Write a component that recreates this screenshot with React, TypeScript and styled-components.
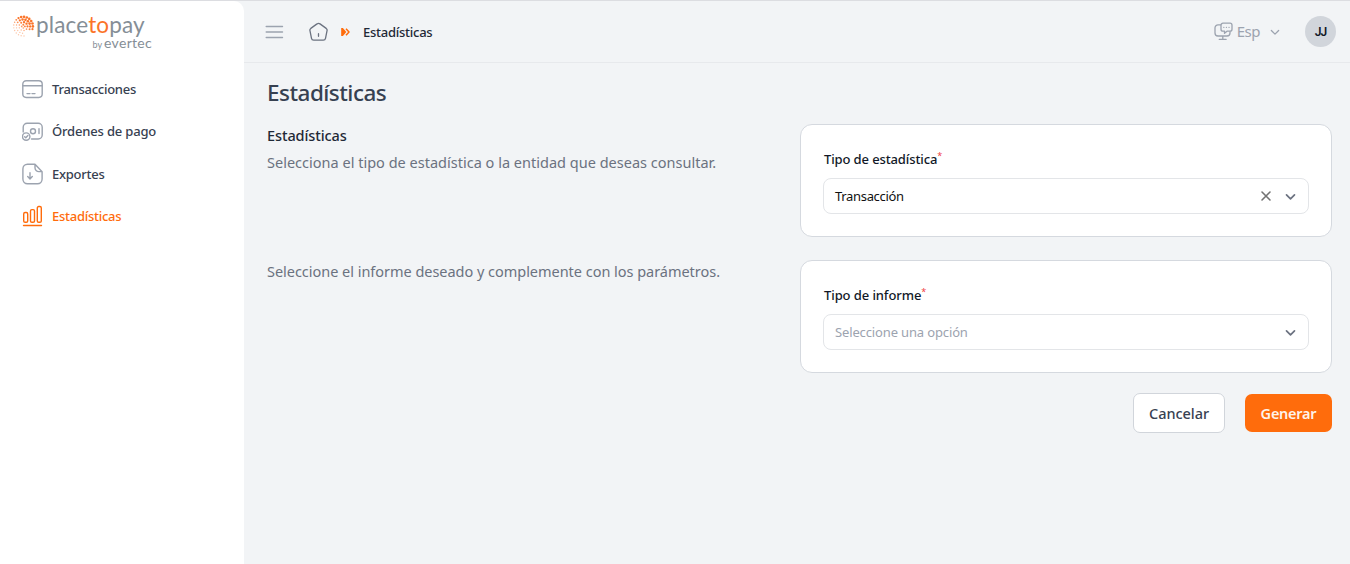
import React from "react";
import styled, { createGlobalStyle } from "styled-components";

const GlobalStyle = createGlobalStyle`
  * { box-sizing: border-box; }
  body { margin: 0; background: #f2f4f6; font-family: "Noto Sans", "Open Sans", sans-serif; }
  button { font-family: inherit; }
`;

const Page = styled.div`
  display: flex;
  height: 564px;
  border-top: 1px solid #dcdde1;
  overflow: hidden;
`;
const Sidebar = styled.aside`
  width: 244px;
  flex: none;
  background: #fff;
  border-top-right-radius: 10px;
`;
const Brand = styled.div`
  display: flex;
  height: 67px;
  padding: 13px 0 0 12px;
`;
const BrandText = styled.div`
  width: 116px;
  display: flex;
  flex-direction: column;
  font-family: Lato, sans-serif;
  color: #858e96;
  white-space: nowrap;
`;
const BrandName = styled.div`
  font-size: 22.5px;
  line-height: 22px;
  height: 22px;
  letter-spacing: 0.15px;
  span { color: #fb7429; }
`;
const BrandBy = styled.div`
  display: flex;
  align-items: baseline;
  justify-content: flex-end;
  gap: 2px;
  font-size: 14px;
  line-height: 13px;
  letter-spacing: 0.3px;
  small { font-size: 9px; letter-spacing: 0; }
`;
const Nav = styled.nav`
  display: flex;
  flex-direction: column;
  padding-left: 22px;
`;
const NavItem = styled.a<{ $active?: boolean }>`
  display: flex;
  align-items: center;
  height: 42.3px;
  gap: 9px;
  color: ${(p) => (p.$active ? "#ff6c0c" : "#374151")};
  svg { color: ${(p) => (p.$active ? "#ff6c0c" : "#9ca3af")}; flex: none; }
`;
const Label = styled.span<{ $size: number; $weight?: number; $track?: number }>`
  font-size: ${(p) => p.$size}px;
  font-weight: ${(p) => p.$weight ?? 400};
  letter-spacing: ${(p) => p.$track ?? 0}px;
  white-space: nowrap;
`;
const Main = styled.main`
  flex: 1;
  min-width: 0;
`;
const Header = styled.header`
  display: flex;
  align-items: center;
  height: 62px;
  padding: 0 14px 0 21px;
  border-bottom: 1px solid #e7e9ec;
  color: #9ca3af;
`;
const Crumbs = styled.div`
  display: flex;
  align-items: center;
  flex: 1;
  margin-left: 24px;
  color: #1f2937;
  svg:first-child { margin-right: 12px; }
  svg:nth-child(2) { margin-right: 12px; }
`;
const Language = styled.div`
  display: flex;
  align-items: center;
  gap: 4px;
  margin-right: 25px;
  > span { line-height: 20px; padding-bottom: 1px; }
  svg:last-child { margin-left: 6px; }
`;
const Avatar = styled.div`
  display: grid;
  place-items: center;
  width: 31px;
  height: 31px;
  border-radius: 50%;
  background: #d1d5db;
  color: #111827;
  font-family: Roboto, sans-serif;
`;
const Content = styled.section`
  padding: 14px 18px 0 23px;
`;
const Title = styled.h1`
  margin: 0;
  height: 47px;
  font-size: 22.5px;
  line-height: 32px;
  font-weight: 500;
  letter-spacing: -0.52px;
  color: #374151;
`;
const Row = styled.div`
  display: grid;
  grid-template-columns: 1fr 532px;
  height: 113px;
  margin-bottom: 23.4px;
`;
const Description = styled.div`
  display: flex;
  flex-direction: column;
  color: #6b7280;
`;
const Heading = styled.div`
  line-height: 22px;
  height: 27px;
  color: #1f2937;
`;
const Subtext = styled.div`
  line-height: 22px;
`;
const Card = styled.div`
  border: 1px solid #d5d9df;
  border-radius: 12px;
  background: #fff;
  padding: 24px 22px 0;
`;
const FieldLabel = styled.div`
  height: 29px;
  line-height: 20px;
  padding-left: 1px;
  color: #111827;
  display: flex;
  sup { color: #ef4444; font-size: 9px; line-height: 14px; }
`;
const Select = styled.div<{ $placeholder?: boolean }>`
  display: flex;
  align-items: center;
  height: 36px;
  padding: 0 12px 0 11px;
  border: 1px solid #e3e5e8;
  border-radius: 8px;
  gap: 13px;
  color: ${(p) => (p.$placeholder ? "#9ca3af" : "#111")};
  > span { flex: 1; }
`;
const Actions = styled.div`
  display: flex;
  justify-content: flex-end;
  align-items: center;
  gap: 20px;
  margin-top: -4px;
  height: 40px;
`;
const Button = styled.button<{ $primary?: boolean }>`
  width: ${(p) => (p.$primary ? 87 : 92)}px;
  height: ${(p) => (p.$primary ? 38 : 40)}px;
  padding: 0;
  border-radius: 7px;
  border: ${(p) => (p.$primary ? "0" : "1px solid #d1d5db")};
  background: ${(p) => (p.$primary ? "#ff6c0c" : "#fff")};
  color: ${(p) => (p.$primary ? "#fff3ea" : "#374151")};
`;

const rings = [
  { r: 1.6, n: 4 }, { r: 4.2, n: 9 }, { r: 6.9, n: 15 }, { r: 9.6, n: 21 },
];
const Dots = () => (
  <svg width="24" height="24" viewBox="0 0 24 24" fill="#fb7429">
    {rings.flatMap(({ r, n }) =>
      Array.from({ length: n }, (_, i) => {
        const a = (i / n) * Math.PI * 2;
        const x = Math.cos(a) * r;
        const y = Math.sin(a) * r;
        const k = (x - y * 1.3) / 15;
        if (x > 1 && y > 3) return null;
        return (
          <circle
            key={`${r}-${i}`}
            cx={11.3 + x}
            cy={12.4 + y}
            r={Math.min(1.3, Math.max(0.7, 0.9 + k * 0.6))}
            opacity={Math.max(0.4, Math.min(1, 0.8 + k * 0.6))}
          />
        );
      })
    )}
  </svg>
);

const line = { fill: "none", stroke: "currentColor", strokeWidth: 1.4, strokeLinecap: "round" as const, strokeLinejoin: "round" as const };
const CardIcon = () => (
  <svg width="21" height="20" viewBox="0 0 21 20" {...line}>
    <rect x=".8" y="1.7" width="19.4" height="16.8" rx="3.4" /><path d="M1 6.7h19M5 14.6h3M10 14.6h3" />
  </svg>
);
const OrderIcon = () => (
  <svg width="21" height="20" viewBox="0 0 21 20" {...line}>
    <path d="M1.2 11V6.2a4 4 0 0 1 4-4h11a4 4 0 0 1 4 4V14a4 4 0 0 1-4 4H9.5" />
    <circle cx="11" cy="10.2" r="2.5" /><path d="M17 7.8v4.8" /><circle cx="4.2" cy="15.6" r="3.7" /><path d="m2.6 15.7 1.2 1.1 2.1-2.3" />
  </svg>
);
const ExportIcon = () => (
  <svg width="21" height="22" viewBox="0 0 21 22" {...line}>
    <path d="M13 1.2H5.5A4.7 4.7 0 0 0 .9 5.9v10.2a4.7 4.7 0 0 0 4.6 4.7h10a4.7 4.7 0 0 0 4.6-4.7V8.7zM13 1.2v3.6a3.8 3.8 0 0 0 3.8 3.8h3.3M8 9.8v6M5.7 13.6 8 15.9l2.3-2.3" />
  </svg>
);
const StatsIcon = () => (
  <svg width="21" height="22" viewBox="0 0 21 22" {...line}>
    <rect x="1.7" y="7.5" width="4" height="9.8" rx="1.4" /><rect x="8.5" y="4.6" width="4" height="12.7" rx="1.4" /><rect x="15.3" y="1.5" width="4" height="15.8" rx="1.4" /><path d="M1.5 20.5h18" />
  </svg>
);
const MenuIcon = () => (
  <svg width="19" height="16" viewBox="0 0 19 16" {...line}><path d="M1.2 2.5h16.3M1.2 8h16.3M1.2 13.5h16.3" /></svg>
);
const HomeIcon = () => (
  <svg width="20" height="20" viewBox="0 0 20 20" {...line} strokeWidth={1.3} stroke="#6b7280">
    <path d="M9 1.9 2.8 6.4a2.3 2.3 0 0 0-.8 2.5l1.5 7.4a2.3 2.3 0 0 0 2.2 1.9h9.6a2.3 2.3 0 0 0 2.2-1.9l1.5-7.4a2.3 2.3 0 0 0-.8-2.5L12 1.9a2.5 2.5 0 0 0-3 0ZM10.5 11.7v2.6" />
  </svg>
);
const ArrowsIcon = () => (
  <svg width="11" height="10" viewBox="0 0 11 10"><path d="M1.2 1h1.7l3.4 4-3.4 4H1.2z" fill="#ff6c0c" /><path d="m6 1.7 3 3.3-3 3.3" fill="none" stroke="#ff6c0c" strokeWidth="1.5" strokeLinejoin="round" /></svg>
);
const LanguageIcon = () => (
  <svg width="19" height="19" viewBox="0 0 19 19" {...line} strokeWidth={1.3}>
    <path d="M6.8 2.8H4A3 3 0 0 0 1 5.8V11a3 3 0 0 0 3 3h9a3 3 0 0 0 3-3V9.8M8.8 14v3M5.3 17.4h6.8" />
    <path d="M9 1.2h7a2 2 0 0 1 2 2v4a2 2 0 0 1-2 2h-3l-2.5 2.1V9.2H9a2 2 0 0 1-2-2v-4a2 2 0 0 1 2-2Z" />
    <path d="M9.8 5.3h.1M12.4 5.3h.1M15 5.3h.1" />
  </svg>
);
const Chevron = ({ color = "#6b7280", size = 11, weight = 1.7 }: { color?: string; size?: number; weight?: number }) => (
  <svg width={size} height={size} viewBox="0 0 11 11" {...line} stroke={color} strokeWidth={weight}><path d="m1.5 3.8 4 4 4-4" /></svg>
);
const Clear = () => (
  <svg width="12" height="12" viewBox="0 0 12 12" {...line} stroke="#737373" strokeWidth={1.6}><path d="m2 2 8 8M10 2l-8 8" /></svg>
);

export default function App() {
  return (
    <>
      <GlobalStyle />
      <Page>
        <Sidebar>
          <Brand>
            <Dots />
            <BrandText>
              <BrandName>place<span>to</span>pay</BrandName>
              <BrandBy><small>by</small>evertec</BrandBy>
            </BrandText>
          </Brand>
          <Nav>
            <NavItem><CardIcon /><Label $size={13} $weight={500} $track={-0.26}>Transacciones</Label></NavItem>
            <NavItem><OrderIcon /><Label $size={13} $weight={500} $track={-0.17}>Órdenes de pago</Label></NavItem>
            <NavItem><ExportIcon /><Label $size={13} $weight={500} $track={-0.25}>Exportes</Label></NavItem>
            <NavItem $active><StatsIcon /><Label $size={13} $weight={500} $track={-0.27}>Estadísticas</Label></NavItem>
          </Nav>
        </Sidebar>
        <Main>
          <Header>
            <MenuIcon />
            <Crumbs>
              <HomeIcon /><ArrowsIcon /><Label $size={13} $weight={500} $track={-0.26}>Estadísticas</Label>
            </Crumbs>
            <Language><LanguageIcon /><Label $size={15} $track={-0.5}>Esp</Label><Chevron color="#9ca3af" size={10} weight={1.4} /></Language>
            <Avatar><Label $size={12} $weight={600} $track={-1}>JJ</Label></Avatar>
          </Header>
          <Content>
            <Title>Estadísticas</Title>
            <Row>
              <Description>
                <Heading><Label $size={14.5} $weight={500} $track={-0.1}>Estadísticas</Label></Heading>
                <Subtext><Label $size={14.5} $track={0.01}>Selecciona el tipo de estadística o la entidad que deseas consultar.</Label></Subtext>
              </Description>
              <Card>
                <FieldLabel><Label $size={13} $weight={500} $track={-0.12}>Tipo de estadística</Label><sup>*</sup></FieldLabel>
                <Select><Label $size={13} $track={-0.32}>Transacción</Label><Clear /><Chevron /></Select>
              </Card>
            </Row>
            <Row>
              <Description><Subtext><Label $size={14.5} $track={-0.03}>Seleccione el informe deseado y complemente con los parámetros.</Label></Subtext></Description>
              <Card>
                <FieldLabel><Label $size={13} $weight={500} $track={-0.09}>Tipo de informe</Label><sup>*</sup></FieldLabel>
                <Select $placeholder><Label $size={13} $track={-0.14}>Seleccione una opción</Label><Chevron /></Select>
              </Card>
            </Row>
            <Actions>
              <Button><Label $size={14.5} $weight={500} $track={-0.05}>Cancelar</Label></Button>
              <Button $primary><Label $size={14.5} $weight={600} $track={-0.25}>Generar</Label></Button>
            </Actions>
          </Content>
        </Main>
      </Page>
    </>
  );
}
